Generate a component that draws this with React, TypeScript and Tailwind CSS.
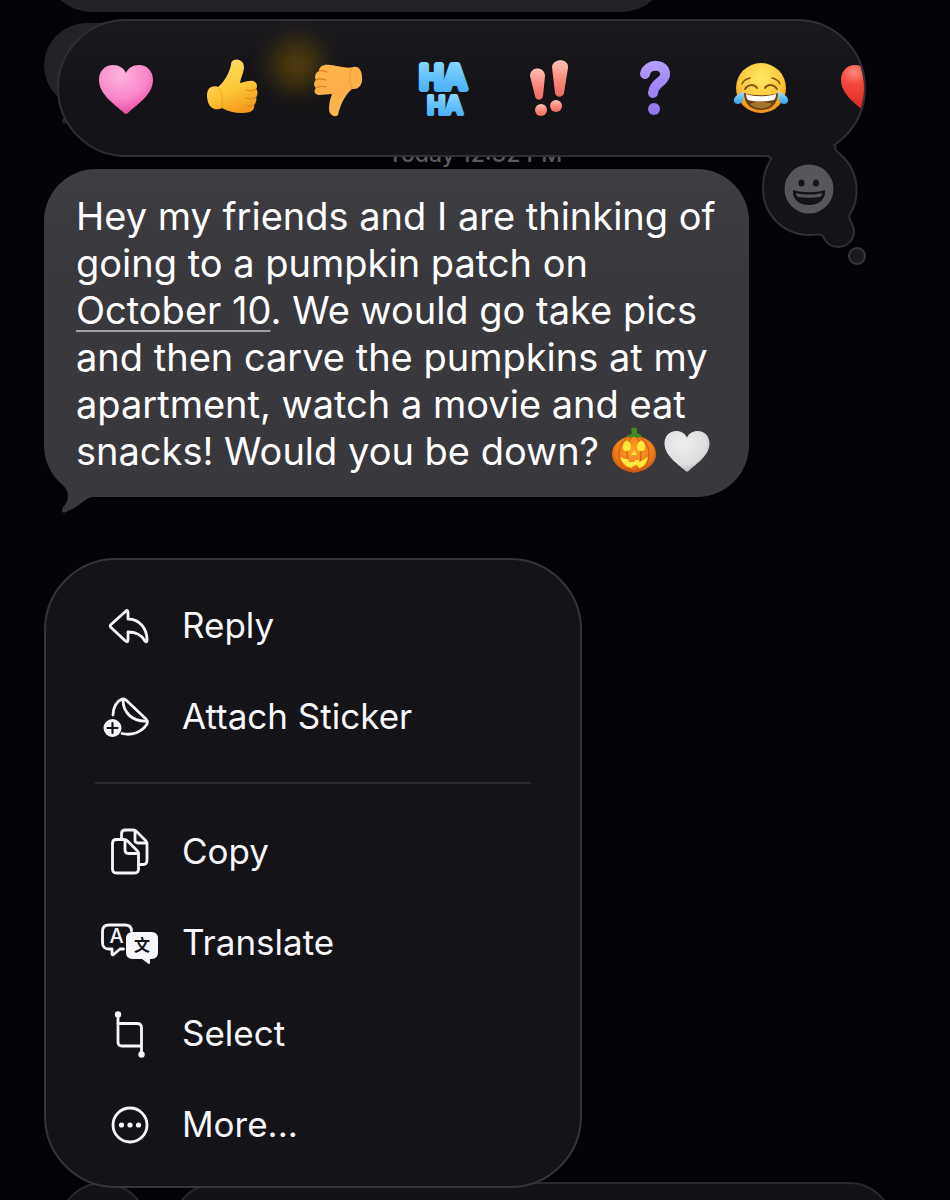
import type { ReactNode } from 'react';

function HeartShape({ fill }: { fill: string }) {
  return (
    <path
      fill={fill}
      d="M30 56C29 56 28 55 26 53C18 46 3 36 3 22C3 13 9 7 17 7C23 7 28 10 30 15C32 10 37 7 43 7C51 7 57 13 57 22C57 36 42 46 34 53C32 55 31 56 30 56Z"
    />
  );
}

function Emoji({ children }: { children: ReactNode }) {
  return (
    <svg viewBox="0 0 60 60" className="size-[60px] shrink-0 overflow-visible" aria-hidden="true">
      {children}
    </svg>
  );
}

function PinkHeart() {
  return (
    <Emoji>
      <defs>
        <radialGradient id="pink" cx="0.4" cy="0.2" r="0.85">
          <stop offset="0" stopColor="#fcb4dc" />
          <stop offset="0.55" stopColor="#f98aca" />
          <stop offset="1" stopColor="#e8439f" />
        </radialGradient>
      </defs>
      <HeartShape fill="url(#pink)" />
    </Emoji>
  );
}

function ThumbsUp() {
  return (
    <Emoji>
      <defs>
        <linearGradient id="thumb-up" x1="0.2" y1="0" x2="0.6" y2="1">
          <stop offset="0" stopColor="#ffe06a" />
          <stop offset="0.6" stopColor="#fdc636" />
          <stop offset="1" stopColor="#f39a1f" />
        </linearGradient>
      </defs>
      <path
        fill="url(#thumb-up)"
        d="M32 2C36 0 42 3 42 9C42 14 39 19 38 25C43 24 48 22 51 23C55 24 56 29 54 31C56 33 56 37 54 39C55 42 54 45 52 47C53 50 51 53 48 54C40 56 28 55 20 50C15 53 8 51 6 44C4 37 5 31 9 29C12 28 15 28 16 29C22 24 27 16 29 7C29 4 30 3 32 2Z"
      />
      <g fill="none" stroke="#e28a16" strokeWidth="1.2" strokeLinecap="round">
        <path d="M54 31C51 33 47 33 44 32" />
        <path d="M54 39C51 41 47 41 44 40" />
        <path d="M52 47C49 49 46 48 44 47" />
        <path d="M16 29C20 34 21 43 20 50" opacity="0.4" />
      </g>
    </Emoji>
  );
}

function ThumbsDown() {
  return (
    <Emoji>
      <defs>
        <linearGradient id="thumb-down" x1="0.3" y1="0" x2="0.4" y2="1">
          <stop offset="0" stopColor="#ffb548" />
          <stop offset="0.5" stopColor="#fdae49" />
          <stop offset="1" stopColor="#fbb64f" />
        </linearGradient>
      </defs>
      <path
        fill="url(#thumb-down)"
        d="M22 7C15 6 11 9 11 13C7 15 6 19 8 22C5 25 6 28 8 30C5 33 7 37 11 37C16 37 20 36 24 36C22 41 21 46 21 51C21 57 27 60 30 57C32 48 36 38 44 31C51 32 55 26 54 19C54 12 50 8 46 9C38 11 32 8 22 7Z"
      />
      <g fill="none" stroke="#dd7d1c" strokeWidth="1.2" strokeLinecap="round">
        <path d="M11 13C14 12 17 13 19 14" />
        <path d="M8 22C11 20 15 21 18 22" />
        <path d="M8 30C11 28 15 28 18 29" />
        <path d="M44 31C41 25 41 15 44 10" opacity="0.4" />
      </g>
    </Emoji>
  );
}

function HaHa() {
  return (
    <Emoji>
      <defs>
        <linearGradient id="haha" x1="0" y1="0" x2="0" y2="1">
          <stop offset="0" stopColor="#8fdcff" />
          <stop offset="0.6" stopColor="#5bbcfc" />
          <stop offset="1" stopColor="#45a9f5" />
        </linearGradient>
      </defs>
      <g
        fill="url(#haha)"
        stroke="url(#haha)"
        strokeLinejoin="round"
        textAnchor="middle"
        className="font-['Inter',sans-serif] font-semibold"
      >
        <text x="29" y="31" fontSize="32" strokeWidth="6">HA</text>
        <text x="31" y="56" fontSize="24" strokeWidth="4">HA</text>
      </g>
    </Emoji>
  );
}

function DoubleBang() {
  return (
    <Emoji>
      <defs>
        <linearGradient id="bang" x1="0" y1="0" x2="0" y2="1">
          <stop offset="0" stopColor="#ffc1b5" />
          <stop offset="0.5" stopColor="#fb8c80" />
          <stop offset="1" stopColor="#ee6a5f" />
        </linearGradient>
      </defs>
      <g fill="url(#bang)">
        <path d="M10 18C10 8 25 8 25 18L23 38C22 43 16 43 15 38Z" />
        <path d="M32 9C33 0 49 0 48 10L44 35C43 40 36 40 35 35Z" />
        <circle cx="21" cy="52" r="6" />
        <circle cx="36" cy="48" r="6" />
      </g>
    </Emoji>
  );
}

function Question() {
  return (
    <Emoji>
      <defs>
        <linearGradient id="question" x1="0" y1="0" x2="0" y2="60" gradientUnits="userSpaceOnUse">
          <stop offset="0" stopColor="#b9a3fb" />
          <stop offset="0.5" stopColor="#a084f6" />
          <stop offset="1" stopColor="#8f74ef" />
        </linearGradient>
      </defs>
      <path
        d="M19 16C21 5 40 5 39 17C38 25 28 24 27 35"
        fill="none"
        stroke="url(#question)"
        strokeWidth="10"
        strokeLinecap="round"
      />
      <circle cx="28" cy="51" r="6" fill="url(#question)" />
    </Emoji>
  );
}

function Joy() {
  return (
    <Emoji>
      <defs>
        <radialGradient id="joy" cx="0.5" cy="0.3" r="0.7">
          <stop offset="0" stopColor="#ffe867" />
          <stop offset="0.6" stopColor="#fdc83a" />
          <stop offset="1" stopColor="#ee8d1c" />
        </radialGradient>
        <linearGradient id="tear" x1="0" y1="0" x2="0" y2="1">
          <stop offset="0" stopColor="#a7e4fb" />
          <stop offset="1" stopColor="#2f9fe8" />
        </linearGradient>
      </defs>
      <circle cx="29" cy="30" r="25" fill="url(#joy)" />
      <path d="M12 35C20 38 38 38 46 35C46 46 39 52 29 52C19 52 12 46 12 35Z" fill="#6b3f14" />
      <path d="M14 36C22 39 36 39 44 36C44 39 43 41 42 42C34 44 24 44 16 42C15 41 14 39 14 36Z" fill="#fff" />
      <path d="M18 46C24 43 34 43 40 46C34 52 24 52 18 46Z" fill="#a5742a" />
      <g fill="none" stroke="#8a5213" strokeWidth="2" strokeLinecap="round">
        <path d="M13 31C16 26 22 26 25 30" />
        <path d="M33 30C36 26 42 26 45 31" />
        <path d="M10 26C11 23 14 21 18 20" strokeWidth="1.5" />
        <path d="M40 20C44 21 47 23 48 26" strokeWidth="1.5" />
      </g>
      <path d="M12 33C12 40 11 46 6 46C1 46 1 41 4 38C6 36 9 35 12 33Z" fill="url(#tear)" />
      <path d="M46 33C46 40 47 46 52 46C57 46 57 41 54 38C52 36 49 35 46 33Z" fill="url(#tear)" />
    </Emoji>
  );
}

function RedHeart() {
  return (
    <Emoji>
      <defs>
        <radialGradient id="red" cx="0.25" cy="0.15" r="0.8">
          <stop offset="0" stopColor="#ff8a80" />
          <stop offset="0.3" stopColor="#f4493f" />
          <stop offset="1" stopColor="#d9251f" />
        </radialGradient>
      </defs>
      <HeartShape fill="url(#red)" />
    </Emoji>
  );
}

const REACTIONS = [
  { label: 'Love', icon: <PinkHeart /> },
  { label: 'Like', icon: <ThumbsUp /> },
  { label: 'Dislike', icon: <ThumbsDown /> },
  { label: 'Laugh', icon: <HaHa /> },
  { label: 'Emphasize', icon: <DoubleBang /> },
  { label: 'Question', icon: <Question /> },
  { label: 'Tears of joy', icon: <Joy /> },
  { label: 'Red heart', icon: <RedHeart /> },
];

function ReactionBar() {
  return (
    <div className="absolute top-[19px] right-[84px] left-[57px] z-10">
      <div className="relative flex h-[138px] items-center overflow-hidden rounded-full border-2 border-[#302f36] bg-linear-to-b from-[#1a191e] to-[#141317] to-50% pl-3.5">
        <div className="absolute top-5 left-[214px] size-12 rounded-full bg-[#6b5005] opacity-70 blur-md" />
        {REACTIONS.map(({ label, icon }) => (
          <button
            key={label}
            type="button"
            aria-label={label}
            className="relative flex w-[106px] shrink-0 justify-center"
          >
            {icon}
          </button>
        ))}
      </div>
      <button type="button" aria-label="Add custom reaction" className="absolute top-[118px] right-0">
        <svg viewBox="0 0 110 132" className="h-[132px] w-[110px]" aria-hidden="true">
          <path
            d="M11 18C15 20 16 21 14 24C8 31 7 41 7 52C7 76 26 98 54 98C60 98 64 96 67 99C70 107 75 110 82 110C91 110 98 103 98 94C98 86 91 84 94 77C103 64 104 38 89 22C83 15 77 14 79 9L60 4L20 6Z"
            fill="#141317"
          />
          <path
            d="M8 19C15 19 16 21 14 24C9 32 7 41 7 52C7 76 26 98 54 98C60 98 64 96 67 99C70 107 75 110 82 110C91 110 98 103 98 94C98 86 91 84 94 77C103 64 104 38 89 22C83 15 77 14 80 8"
            fill="none"
            stroke="#302f36"
            strokeWidth="2"
          />
          <circle cx="101" cy="119" r="8" fill="#1a191e" stroke="#38373d" strokeWidth="2" />
          <circle cx="53" cy="52" r="24.5" fill="#57565b" />
          <ellipse cx="45.5" cy="46" rx="3" ry="3.5" fill="#141317" />
          <ellipse cx="60" cy="46" rx="3" ry="3.5" fill="#141317" />
          <path d="M37 53C46 56 60 56 69 53C70 62 63 68 53 68C43 68 36 62 37 53Z" fill="#141317" />
          <path d="M40 56C48 58 58 58 66 56C66 58 65 59 64 60C57 61 49 61 42 60C41 59 40 58 40 56Z" fill="#57565b" />
        </svg>
      </button>
    </div>
  );
}

function BubbleTail({ className }: { className: string }) {
  return (
    <svg viewBox="0 0 66 40" className={`absolute -bottom-4 left-2.5 h-10 w-[66px] ${className}`} aria-hidden="true">
      <path
        fill="currentColor"
        d="M0 2C5 10 14 14 14 23C14 31 8 33 8 38C8 40 11 40 14 38C25 34 31 25 38 24L66 24L40 0Z"
      />
    </svg>
  );
}

function Pumpkin() {
  return (
    <svg viewBox="0 0 48 48" role="img" aria-label="🎃" className="-my-2 inline size-12 align-[-1px]">
      <defs>
        <radialGradient id="pumpkin" cx="0.5" cy="0.4" r="0.6">
          <stop offset="0" stopColor="#ffa52e" />
          <stop offset="0.7" stopColor="#f07d18" />
          <stop offset="1" stopColor="#cf5610" />
        </radialGradient>
      </defs>
      <ellipse cx="24" cy="28" rx="22" ry="18" fill="url(#pumpkin)" />
      <g fill="none" stroke="#cf5c10" strokeWidth="1.2">
        <ellipse cx="24" cy="28" rx="15" ry="18" />
        <ellipse cx="24" cy="28" rx="7" ry="18" />
      </g>
      <path d="M16 11C18 8 21 9 22 7L21 3C23 1 26 1 27 3L27 7C29 8 31 8 32 11C29 10 28 12 27 12C25 10 23 10 21 12C19 10 18 11 16 11Z" fill="#3f8a22" />
      <g fill="#ffe83b">
        <path d="M13 23C12 17 16 14 18 15C21 17 22 22 20 24C17 26 14 25 13 23Z" />
        <path d="M35 23C36 17 32 14 30 15C27 17 26 22 28 24C31 26 34 25 35 23Z" />
        <path d="M24 24L27 29L21 29Z" />
        <path d="M10 31L15 33L18 33L19 36L24 36L25 34L29 34L29 36L33 34L38 31C37 38 32 42 29 42L27 39L23 40L22 42C16 41 12 37 10 31Z" />
      </g>
    </svg>
  );
}

function WhiteHeart() {
  return (
    <svg viewBox="0 4 60 54" role="img" aria-label="🤍" className="-my-2 ml-1 inline h-12 w-[50px] align-[-2px]">
      <defs>
        <radialGradient id="white" cx="0.4" cy="0.3" r="0.75">
          <stop offset="0" stopColor="#eeeeef" />
          <stop offset="0.7" stopColor="#dededf" />
          <stop offset="1" stopColor="#b4b4b7" />
        </radialGradient>
      </defs>
      <HeartShape fill="url(#white)" />
    </svg>
  );
}

function MessageBubble() {
  return (
    <article className="relative ml-11 w-[705px] rounded-[52px] bg-linear-to-b from-[#3e3d41] to-[#39383d] to-30% px-8 pt-6 pb-[22px]">
      <BubbleTail className="text-[#39383d]" />
      <p className="relative text-[38px] leading-[47px] text-white">
        Hey my friends and I are thinking of going to a pumpkin patch on{' '}
        <a href="#october-10" className="underline decoration-[#a3a3a6] decoration-2 underline-offset-6">
          October 10
        </a>
        . We would go take pics and then carve the pumpkins at my apartment, watch a movie and eat
        snacks! Would you be down? <Pumpkin />
        <WhiteHeart />
      </p>
    </article>
  );
}

function MenuIcon({ children }: { children: ReactNode }) {
  return (
    <svg
      viewBox="0 0 60 60"
      className="size-[60px] shrink-0"
      fill="none"
      stroke="currentColor"
      strokeWidth="2.8"
      strokeLinecap="round"
      strokeLinejoin="round"
      aria-hidden="true"
    >
      {children}
    </svg>
  );
}

function ReplyIcon() {
  return (
    <MenuIcon>
      <path d="M26.5 15.5Q29 13 29 16.5V23C41 23 48 33 48 44Q48 47 46 45C42 38 37 36 29 36V43.5Q29 47 26.5 45L12 31.5Q10.5 30 12 28.5Z" />
    </MenuIcon>
  );
}

function StickerIcon() {
  return (
    <MenuIcon>
      <path d="M14 28C14 20 18 14 23 12Q25 11.5 27 13L47 32Q49 34 48 37C43 45 33 49 23 46.5" />
      <path d="M24 13C24 25 33 35 48 34" />
      <circle cx="13.5" cy="41" r="9" fill="currentColor" stroke="none" />
      <path d="M13.5 36V46M8.5 41H18.5" stroke="#141317" strokeWidth="2.2" />
    </MenuIcon>
  );
}

function CopyIcon() {
  return (
    <MenuIcon>
      <path d="M22.5 17V12Q22.5 8 26.5 8H34Q36 8 37.5 9.5L46.5 18.5Q48 20 48 22V38Q48 42.5 44 42.5H40" />
      <path d="M36 9V18Q36 21 39 21H47" />
      <path d="M17.500 17.500H25Q27 17.500 28.500 19L38 28.500Q39.500 30 39.500 32V47Q39.500 51 35.500 51H17.500Q13.500 51 13.500 47V21.500Q13.500 17.500 17.500 17.500Z" />
      <path d="M26 18.5V28Q26 31.5 29.5 31.5H39" />
    </MenuIcon>
  );
}

function TranslateIcon() {
  return (
    <MenuIcon>
      <path d="M24.5 36H21L14.5 41.5Q13 42.5 13 40.5V36H10Q3.5 36 3.5 29.5V18.5Q3.5 12 10 12H26Q32.5 12 32.5 18" />
      <path
        d="M33.5 19H52.5Q59 19 59 25.5V39.5Q59 46 52.5 46H51V49.5Q51 52 49 50.5L43 46H33.5Q27 46 27 39.5V25.5Q27 19 33.5 19Z"
        fill="currentColor"
        stroke="none"
      />
      <g stroke="none" textAnchor="middle">
        <text x="17.5" y="30" fontSize="20" fill="currentColor" className="font-['Inter',sans-serif] font-medium">A</text>
        <text x="43" y="38" fontSize="16" fill="#141317" className="font-['Noto_Sans_CJK_SC',sans-serif] font-bold">文</text>
      </g>
    </MenuIcon>
  );
}

function SelectIcon() {
  return (
    <MenuIcon>
      <path d="M19 11V38Q19 42 23 42H42" />
      <path d="M19 19.5H38Q42.5 19.5 42.5 24V50" />
      <circle cx="19" cy="10.5" r="3.2" fill="currentColor" stroke="none" />
      <circle cx="42.5" cy="50.5" r="3.2" fill="currentColor" stroke="none" />
    </MenuIcon>
  );
}

function MoreIcon() {
  return (
    <MenuIcon>
      <circle cx="31" cy="30" r="17" />
      <g fill="currentColor" stroke="none">
        <circle cx="22.5" cy="30" r="2.6" />
        <circle cx="31" cy="30" r="2.6" />
        <circle cx="39.5" cy="30" r="2.6" />
      </g>
    </MenuIcon>
  );
}

function MenuItem({ icon, label }: { icon: ReactNode; label: string }) {
  return (
    <li>
      <button type="button" className="flex h-[91px] w-full items-center gap-[23px] pl-[53px] text-left text-[35px] text-[#f7f7fa]">
        {icon}
        {label}
      </button>
    </li>
  );
}

function ContextMenu() {
  return (
    <nav className="relative z-10 mt-[61px] ml-11 w-[538px] rounded-[72px] border-2 border-[#35343a] bg-[#141317] pt-5 pb-4">
      <ul>
        <MenuItem icon={<ReplyIcon />} label="Reply" />
        <MenuItem icon={<StickerIcon />} label="Attach Sticker" />
      </ul>
      <hr className="mx-[49px] mt-5 mb-[22px] border-t-2 border-[#2a292e]" />
      <ul>
        <MenuItem icon={<CopyIcon />} label="Copy" />
        <MenuItem icon={<TranslateIcon />} label="Translate" />
        <MenuItem icon={<SelectIcon />} label="Select" />
        <MenuItem icon={<MoreIcon />} label="More..." />
      </ul>
    </nav>
  );
}

function Composer() {
  return (
    <footer className="-mt-1.5 flex shrink-0 gap-6 pr-14 pl-[58px]">
      <button
        type="button"
        aria-label="Add attachment"
        className="size-[90px] shrink-0 rounded-full border-2 border-[#29282d] bg-[#131216]"
      />
      <input
        type="text"
        aria-label="Message"
        className="h-[90px] min-w-0 flex-1 rounded-full border-2 border-[#29282d] bg-[#131216] px-8 text-[35px] text-white"
      />
    </footer>
  );
}

export default function App() {
  return (
    <main className="relative flex h-screen flex-col overflow-hidden bg-[#030207] font-['Inter','Noto_Sans',sans-serif]">
      <div className="-mt-[84px] ml-[44px] h-24 w-[625px] shrink-0 rounded-[48px] bg-[#232227]" />
      <div className="relative mt-[11px] ml-11 h-[85px] w-[310px] shrink-0 rounded-full bg-[#232227]">
        <BubbleTail className="text-[#232227]" />
      </div>
      <time className="mt-[31px] text-center text-[23px] leading-[30px] font-medium text-[#5c5b62]">
        Today 12:32 PM
      </time>
      <ReactionBar />
      <MessageBubble />
      <ContextMenu />
      <Composer />
    </main>
  );
}
